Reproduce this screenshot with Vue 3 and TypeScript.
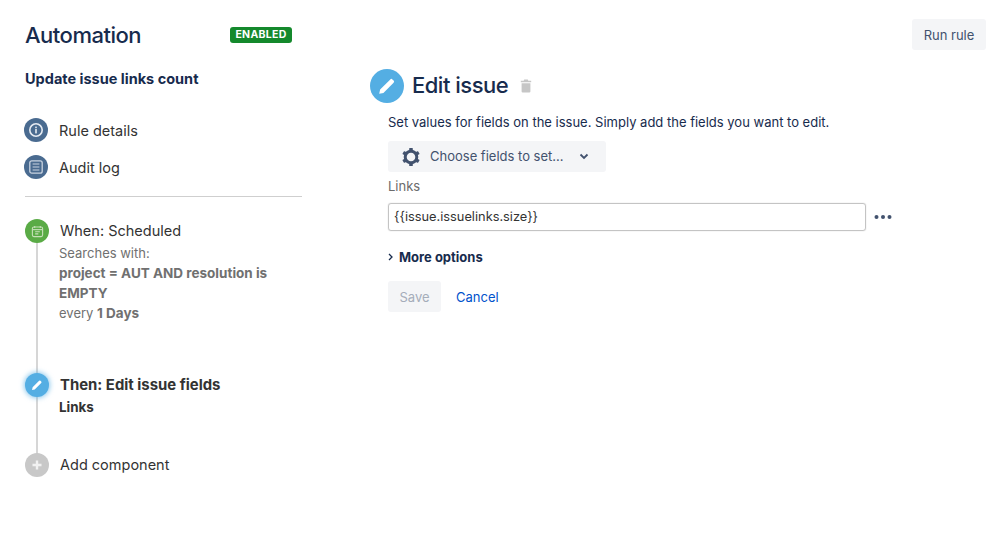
<script setup lang="ts">
const pencil = "M3.5 20.5l1-4.6L15.6 4.8a1.6 1.6 0 0 1 2.3 0l1.3 1.3a1.6 1.6 0 0 1 0 2.3L8.1 19.5z";
</script>

<template>
  <div class="page">
    <aside class="side">
      <div class="head">
        <h1 class="title">Automation</h1>
        <span class="lozenge">ENABLED</span>
      </div>
      <h2 class="rule-name">Update issue links count</h2>
      <nav class="nav">
        <div class="nav-row">
          <span class="dot navy">
            <svg width="16" height="16" viewBox="0 0 16 16" fill="none">
              <circle cx="8" cy="8" r="6.2" stroke="#e6ebf2" stroke-width="1.6" />
              <rect x="7.2" y="7" width="1.6" height="4.4" fill="#e6ebf2" />
              <rect x="7.2" y="4.6" width="1.6" height="1.6" fill="#e6ebf2" />
            </svg>
          </span>
          <span>Rule details</span>
        </div>
        <div class="nav-row">
          <span class="dot navy">
            <svg width="16" height="16" viewBox="0 0 16 16" fill="none">
              <rect x="1.8" y="1.8" width="12.4" height="12.4" rx="2" stroke="#c9d3e0" stroke-width="1.3" />
              <path d="M4.6 5h6.8M4.6 8h6.8M4.6 11h6.8" stroke="#c9d3e0" stroke-width="1.2" />
            </svg>
          </span>
          <span>Audit log</span>
        </div>
      </nav>
      <div class="rule"></div>
      <div class="steps">
        <div class="step step-when">
          <span class="dot green">
            <svg width="13" height="13" viewBox="0 0 14 14" fill="none">
              <rect x="1.5" y="2.2" width="11" height="10.3" rx="1.6" stroke="#c6e0b8" stroke-width="1.2" />
              <path d="M1.8 5h10.4" stroke="#c6e0b8" stroke-width="1.2" />
              <path d="M4 1.2v2M10 1.2v2" stroke="#c6e0b8" stroke-width="1.1" />
              <path d="M4.5 7.2h5M4.5 9.6h3.4" stroke="#c6e0b8" stroke-width="1.2" />
            </svg>
          </span>
          <div class="step-body">
            <div class="step-title">When: Scheduled</div>
            <div class="step-desc">
              <div>Searches with:</div>
              <div class="strong">project = AUT AND resolution is EMPTY</div>
              <div>every <span class="strong">1 Days</span></div>
            </div>
          </div>
        </div>
        <div class="step step-then">
          <span class="dot blue glow">
            <svg width="14" height="14" viewBox="0 0 24 24"><path :d="pencil" fill="#fff" /></svg>
          </span>
          <div class="step-body">
            <div class="step-title bold">Then: Edit issue fields</div>
            <div class="step-sub">Links</div>
          </div>
        </div>
        <div class="step step-add">
          <span class="dot grey">
            <svg width="12" height="12" viewBox="0 0 12 12"><path d="M6 1.5v9M1.5 6h9" stroke="#f1f1f1" stroke-width="2.4" /></svg>
          </span>
          <div class="step-body">
            <div class="step-title">Add component</div>
          </div>
        </div>
      </div>
    </aside>

    <main class="main">
      <div class="edit-head">
        <span class="big-dot">
          <svg width="22" height="22" viewBox="0 0 24 24"><path :d="pencil" fill="#fff" /></svg>
        </span>
        <h2 class="edit-title">Edit issue</h2>
        <svg class="trash" width="12" height="14" viewBox="0 0 12 14" fill="#c6c6c6">
          <path d="M4.2 0.6h3.6l.5 1.2h2.900v1.500H.8V1.800h2.900z" />
          <path d="M1.6 4.200h8.800v8.200a1.100 1.100 0 0 1-1.100 1.100H2.700a1.100 1.100 0 0 1-1.100-1.100z" />
        </svg>
      </div>
      <div class="form">
        <p class="intro">Set values for fields on the issue. Simply add the fields you want to edit.</p>
        <button class="choose" type="button">
          <svg width="20" height="20" viewBox="0 0 20 20" fill="none">
            <circle cx="10" cy="10" r="5.800" stroke="#42526e" stroke-width="3" />
            <g fill="#42526e">
              <rect x="8.200" y="1" width="3.600" height="3.200" rx="0.600" />
              <rect x="8.200" y="1" width="3.600" height="3.200" rx="0.600" transform="rotate(60 10 10)" />
              <rect x="8.200" y="1" width="3.600" height="3.200" rx="0.600" transform="rotate(120 10 10)" />
              <rect x="8.200" y="1" width="3.600" height="3.200" rx="0.600" transform="rotate(180 10 10)" />
              <rect x="8.200" y="1" width="3.600" height="3.200" rx="0.600" transform="rotate(240 10 10)" />
              <rect x="8.200" y="1" width="3.600" height="3.200" rx="0.600" transform="rotate(300 10 10)" />
            </g>
          </svg>
          <span class="choose-label">Choose fields to set...</span>
          <svg width="10" height="7" viewBox="0 0 10 7" fill="none"><path d="M1.500 1.500L5 5l3.500-3.500" stroke="#42526e" stroke-width="1.800" /></svg>
        </button>
        <label class="field-label">Links</label>
        <div class="field-row">
          <div class="input">&#123;&#123;issue.issuelinks.size&#125;&#125;</div>
          <svg class="more" width="18" height="6" viewBox="0 0 18 6" fill="#42526e">
            <circle cx="2.500" cy="3" r="2" /><circle cx="9" cy="3" r="2" /><circle cx="15.500" cy="3" r="2" />
          </svg>
        </div>
        <div class="more-options">
          <svg width="5" height="8" viewBox="0 0 5 8" fill="none"><path d="M1 1l3 3-3 3" stroke="#172b4d" stroke-width="1.300" /></svg>
          <span>More options</span>
        </div>
        <div class="actions">
          <button class="save" type="button" disabled>Save</button>
          <a class="cancel">Cancel</a>
        </div>
      </div>
    </main>

    <button class="run" type="button">Run rule</button>
  </div>
</template>

<style>
html, body { margin: 0; background: #fff; }
</style>

<style scoped>
.page {
  position: relative;
  display: flex;
  width: 998px;
  height: 536px;
  overflow: hidden;
  box-sizing: border-box;
  font-family: Inter, "Noto Sans", sans-serif;
  color: #172b4d;
}
.side {
  width: 277px;
  margin-left: 25px;
  padding-top: 19px;
  flex: none;
}
.head {
  display: flex;
  align-items: center;
  justify-content: space-between;
  padding-right: 10px;
  height: 32px;
}
.title {
  margin: 0;
  font-size: 22px;
  font-weight: 500;
  letter-spacing: -0.5px;
}
.lozenge {
  width: 62px;
  height: 16px;
  background: #14892c;
  color: #fff;
  border-radius: 3px;
  font-size: 10.5px;
  font-weight: 700;
  line-height: 16px;
  text-align: center;
  letter-spacing: 0.3px;
}
.rule-name {
  margin: 17px 0 0;
  font-size: 14.5px;
  line-height: 22px;
  font-weight: 700;
}
.nav {
  margin: 28px 0 0 -1px;
  display: flex;
  flex-direction: column;
  gap: 13px;
}
.nav-row {
  display: flex;
  align-items: center;
  gap: 11px;
  height: 24px;
  font-size: 14.5px;
  color: #333;
}
.dot {
  width: 24px;
  height: 24px;
  border-radius: 50%;
  display: flex;
  align-items: center;
  justify-content: center;
  flex: none;
}
.navy { background: #4a6b90; }
.green { background: #5aab46; }
.blue { background: #54aee3; }
.grey { background: #c8c8c8; }
.glow { box-shadow: 0 0 5px 1px rgba(84, 174, 227, 0.65); }
.rule {
  height: 1px;
  background: #cfcfcf;
  margin-top: 17px;
}
.steps {
  position: relative;
  margin-top: 22px;
}
.steps::before {
  content: "";
  position: absolute;
  left: 11px;
  top: 10px;
  height: 240px;
  width: 2px;
  background: #d6d6d6;
}
.step {
  position: relative;
  display: flex;
  gap: 11px;
}
.step-when { height: 154px; }
.step-then { height: 80px; }
.step-body { padding-top: 1px; min-width: 0; }
.step-title {
  font-size: 14.5px;
  line-height: 22px;
  color: #333;
}
.step-title.bold { font-size: 14.9px; font-weight: 700; }
.step-desc {
  margin-top: 1px;
  margin-left: -1px;
  font-size: 13px;
  line-height: 20px;
  color: #707070;
}
.strong { font-size: 13.5px; font-weight: 700; }
.step-sub {
  margin-top: 1px;
  margin-left: -1px;
  font-size: 13.4px;
  line-height: 20px;
  font-weight: 700;
  color: #333;
}
.main {
  margin-left: 68px;
  padding-top: 68px;
  flex: 1;
}
.edit-head {
  display: flex;
  align-items: center;
  height: 36px;
}
.big-dot {
  width: 34px;
  height: 34px;
  border-radius: 50%;
  background: #54aee3;
  display: flex;
  align-items: center;
  justify-content: center;
}
.edit-title {
  margin: 0 0 2px 8px;
  font-size: 22px;
  font-weight: 500;
  letter-spacing: -0.5px;
}
.trash { margin-left: 12px; }
.form { margin-left: 18px; }
.intro {
  margin: 8px 0 0;
  font-size: 13px;
  line-height: 20px;
}
.choose {
  margin-top: 9px;
  display: flex;
  align-items: center;
  width: 218px;
  height: 31px;
  padding: 0 0 0 13px;
  border: 0;
  border-radius: 3px;
  background: #f4f5f7;
  color: #42526e;
  font: inherit;
  font-size: 13px;
}
.choose-label { margin: 0 15px 1px 9px; }
.field-label {
  display: block;
  margin-top: 5px;
  font-size: 13px;
  line-height: 18px;
  color: #6b6b6b;
}
.field-row {
  display: flex;
  align-items: center;
  margin-top: 8px;
}
.input {
  box-sizing: border-box;
  width: 478px;
  height: 28px;
  border: 1px solid #c4c4c4;
  border-radius: 3px;
  box-shadow: 0 0 1px rgba(0, 0, 0, 0.3);
  padding-left: 5px;
  font-size: 12.8px;
  line-height: 26px;
  color: #333;
}
.more { margin-left: 8px; }
.more-options {
  display: flex;
  align-items: center;
  gap: 6px;
  margin-top: 16px;
  height: 20px;
  font-size: 13px;
  font-weight: 700;
}
.actions {
  display: flex;
  align-items: center;
  margin-top: 14px;
}
.save {
  width: 53px;
  height: 31px;
  border: 0;
  border-radius: 3px;
  background: #f4f5f7;
  color: #a5adba;
  font: inherit;
  font-size: 13px;
}
.cancel {
  margin-left: 15px;
  font-size: 13px;
  color: #0052cc;
}
.run {
  position: absolute;
  top: 19px;
  right: 12px;
  width: 74px;
  height: 31px;
  border: 0;
  border-radius: 3px;
  background: #f4f5f7;
  color: #42526e;
  font: inherit;
  font-size: 13px;
}
</style>
